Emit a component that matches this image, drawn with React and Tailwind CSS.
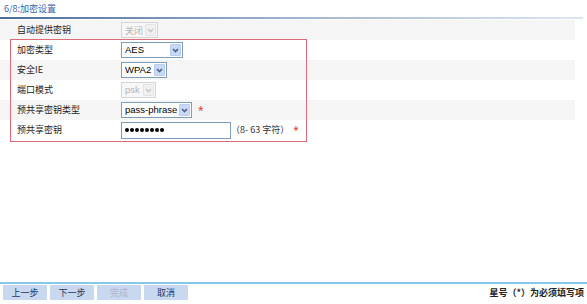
import { useState } from "react";

const cjk = "font-['Noto_Sans_CJK_SC','Noto_Sans',sans-serif]";

function Arrow({ disabled }) {
  return (
    <span
      className={
        "flex h-[12px] w-[11px] shrink-0 items-center justify-center rounded-[1px] border " +
        (disabled ? "border-[#e2e2e2] bg-[#f0f0f0]" : "border-[#b8cbf0] bg-[#c9d8f8]")
      }
    >
      <svg width="7" height="5" viewBox="0 0 7 5">
        <path
          d="M1 1 L3.5 3.5 L6 1"
          fill="none"
          stroke={disabled ? "#c8c8c8" : "#4d6185"}
          strokeWidth="1.6"
        />
      </svg>
    </span>
  );
}

function Select({ value, width, disabled, cn }) {
  return (
    <div
      className={
        "flex h-[16px] shrink-0 items-center justify-between border pl-[3px] pr-[1px] " +
        (disabled ? "border-[#d4d4d4] bg-[#f7f7f7] text-[#b4b4b4]" : "border-[#7f9db9] bg-white text-black") +
        " " +
        width
      }
    >
      <span
        className={
          (cn ? cjk + " text-[9px]" : "font-['Liberation_Sans',sans-serif] text-[9.5px]") +
          " whitespace-nowrap leading-none"
        }
      >
        {value}
      </span>
      <Arrow disabled={disabled} />
    </div>
  );
}

function Row({ label, gray, children }) {
  return (
    <div className={"flex h-[20px] items-center " + (gray ? "bg-[#f5f5f5]" : "bg-white")}>
      <div className={"w-[121px] shrink-0 pl-[17px] text-[9px] text-[#222] " + cjk}>{label}</div>
      <div className="flex items-center">{children}</div>
    </div>
  );
}

const Star = ({ gap }) => (
  <span className={(gap || "ml-[6px]") + " text-[10px] leading-none text-[#e03a3a]"}>*</span>
);

export default function App() {
  const [buttons] = useState(["上一步", "下一步", "完成", "取消"]);
  const dots = [0, 1, 2, 3, 4, 5, 6, 7];

  return (
    <div className="flex h-[304px] w-[587px] flex-col bg-white">
      <div className={"flex h-[17px] items-center pl-[4px] text-[9px] text-[#3a62a8] " + cjk}>6/8:加密设置</div>
      <div className="h-[2px] w-[583px] bg-gradient-to-r from-[#4a6c9c] via-[#9fb4cf] to-[#dde6f0]" />
      <div className="mt-px w-[575px]">
        <Row label="自动提供密钥" gray>
          <Select value="关闭" width="w-[37px]" disabled cn />
        </Row>
        <div className="relative">
          <Row label="加密类型">
            <Select value="AES" width="w-[62px]" />
          </Row>
          <Row label="安全IE" gray>
            <Select value="WPA2" width="w-[46px]" />
          </Row>
          <Row label="端口模式">
            <Select value="psk" width="w-[35px]" disabled />
          </Row>
          <Row label="预共享密钥类型" gray>
            <Select value="pass-phrase" width="w-[71px]" />
            <Star />
          </Row>
          <Row label="预共享密钥">
            <div className="flex h-[17px] w-[110px] shrink-0 items-center gap-[1px] border border-[#7f9db9] bg-white pl-[3px]">
              {dots.map((d) => (
                <span key={d} className="h-[4px] w-[4px] rounded-full bg-black" />
              ))}
            </div>
            <span className={"whitespace-nowrap text-[9px] text-[#333] " + cjk}>（8- 63 字符）</span>
            <Star gap="ml-[4px]" />
          </Row>
          <div className="pointer-events-none absolute left-[10px] top-[-1px] bottom-[-2px] w-[297px] border border-[#e06a78]" />
        </div>
      </div>
      <div className="flex-1" />
      <div className="h-[2px] w-full bg-[#86c8ea]" />
      <div className="mb-[4px] mt-[1px] flex h-[15px] items-center justify-between pl-[3px] pr-[3px]">
        <div className="flex gap-[3px]">
          {buttons.map((b) => (
            <div
              key={b}
              className={
                "flex h-[15px] w-[44px] items-center justify-center bg-[#c8d8ef] text-[9px] " +
                cjk +
                (b === "完成" ? " text-[#aab6c8]" : " text-[#1d3566]")
              }
            >
              {b}
            </div>
          ))}
        </div>
        <span className={"text-[9px] font-semibold text-[#222] " + cjk}>星号（*）为必须填写项</span>
      </div>
    </div>
  );
}
